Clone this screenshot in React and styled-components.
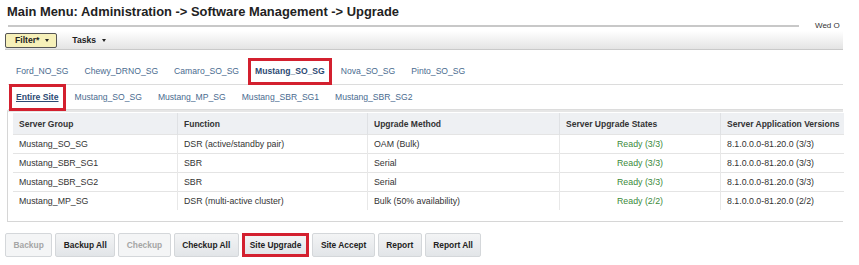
import React from "react";
import styled, { createGlobalStyle } from "styled-components";

const GlobalStyle = createGlobalStyle`
  body {
    margin: 0;
    background: #fff;
    font-family: "Liberation Sans", Arial, sans-serif;
    color: #333;
  }
`;

const Page = styled.div`
  width: 838px;
  padding: 4px 0 0 5px;
`;

const Header = styled.div`
  display: flex;
  align-items: flex-end;
`;

const TitleBlock = styled.div`
  width: 791px;
  margin-left: 3px;
  border-bottom: 2px solid #c8c8c8;
  padding-bottom: 5px;
`;

const Title = styled.h1`
  margin: 0 0 0 -1px;
  font-size: 12.9px;
  font-weight: bold;
  color: #222;
  line-height: 16px;
`;

const DateText = styled.div`
  margin-left: 16px;
  font-size: 8px;
  color: #333;
  line-height: 10px;
  position: relative;
  top: 4px;
`;

const Toolbar = styled.div`
  margin-top: 4px;
  height: 18px;
  display: flex;
  align-items: center;
  gap: 5px;
  background: linear-gradient(#ffffff, #e4e4e4);
  border-bottom: 1px solid #c9c9c9;
`;

const ToolButton = styled.div`
  display: flex;
  align-items: center;
  gap: 6px;
  height: 13px;
  padding: 0 7px 0 9px;
  font-size: 8.6px;
  font-weight: bold;
  color: #222;
  background: ${(p) => (p.$active ? "#f6f0b9" : "transparent")};
  border: 1px solid ${(p) => (p.$active ? "#555" : "transparent")};
  border-radius: 2px;
`;

const Caret = styled.span`
  width: 0;
  height: 0;
  border-left: 2.5px solid transparent;
  border-right: 2.5px solid transparent;
  border-top: 3px solid #222;
`;

const TabRow = styled.div`
  display: flex;
  align-items: center;
  height: ${(p) => p.$h}px;
  margin-left: 3px;
  margin-top: ${(p) => p.$mt || 0}px;
  border-bottom: 1px solid #dcdcdc;
`;

const Tab = styled.div`
  font-size: 8.6px;
  line-height: 11px;
  color: ${(p) => (p.$active ? "#2c4a73" : "#4a6b8f")};
  font-weight: ${(p) => (p.$active ? "bold" : "normal")};
  text-decoration: ${(p) => (p.$underline ? "underline" : "none")};
  padding: ${(p) => (p.$boxed ? "5px 4px" : "5px 8px")};
  margin: ${(p) => (p.$boxed ? "0 1px" : "0")};
  border: ${(p) => (p.$boxed ? "3px solid #d3202f" : "none")};
  white-space: nowrap;
`;

const TableFrame = styled.div`
  margin: 0 0 0 2px;
  height: 112px;
  padding: 1px 0 0 5px;
  border: 1px solid #d6d6d6;
  border-right: none;
  border-top: 2px solid #e6e6e6;
  box-sizing: border-box;
`;

const Table = styled.table`
  width: 831px;
  table-layout: fixed;
  border-collapse: collapse;
  font-size: 8.8px;
`;

const Th = styled.th`
  text-align: left;
  font-size: 8.5px;
  font-weight: bold;
  color: #333;
  background: #eef0f3;
  height: 21px;
  padding: 0 6px;
  border-right: 1px solid #dfe1e4;
  width: ${(p) => p.$w}px;
  white-space: nowrap;
  overflow: hidden;
  &:last-child {
    border-right: none;
  }
`;

const Td = styled.td`
  height: 18px;
  padding: 0 6px;
  color: ${(p) => (p.$ready ? "#3b8a3b" : "#333")};
  text-align: ${(p) => (p.$ready ? "center" : "left")};
  border-top: 1px solid #e4e4e4;
  border-right: 1px solid #e8e8e8;
  white-space: nowrap;
  &:last-child {
    border-right: none;
  }
`;

const ButtonBar = styled.div`
  display: flex;
  gap: 3px;
  margin-top: 11px;
`;

const Button = styled.div`
  height: 24px;
  display: flex;
  align-items: center;
  padding: 0 ${(p) => (p.$boxed ? 5 : 7.5)}px;
  font-size: 8.4px;
  font-weight: bold;
  color: ${(p) => (p.$disabled ? "#a5a5a5" : "#222")};
  background: ${(p) =>
    p.$disabled ? "#f4f5f6" : "linear-gradient(#f3f4f5, #e2e5e8)"};
  border: ${(p) => (p.$boxed ? "3px solid #d3202f" : "1px solid #d4d7da")};
  border-radius: ${(p) => (p.$boxed ? 0 : 2)}px;
  box-sizing: border-box;
`;

const tabs1 = ["Ford_NO_SG", "Chewy_DRNO_SG", "Camaro_SO_SG", "Mustang_SO_SG", "Nova_SO_SG", "Pinto_SO_SG"];
const tabs2 = ["Entire Site", "Mustang_SO_SG", "Mustang_MP_SG", "Mustang_SBR_SG1", "Mustang_SBR_SG2"];

const rows = [
  ["Mustang_SO_SG", "DSR (active/standby pair)", "OAM (Bulk)", "Ready (3/3)", "8.1.0.0.0-81.20.0 (3/3)"],
  ["Mustang_SBR_SG1", "SBR", "Serial", "Ready (3/3)", "8.1.0.0.0-81.20.0 (3/3)"],
  ["Mustang_SBR_SG2", "SBR", "Serial", "Ready (3/3)", "8.1.0.0.0-81.20.0 (3/3)"],
  ["Mustang_MP_SG", "DSR (multi-active cluster)", "Bulk (50% availability)", "Ready (2/2)", "8.1.0.0.0-81.20.0 (2/2)"],
];

const buttons = [
  { label: "Backup", disabled: true },
  { label: "Backup All" },
  { label: "Checkup", disabled: true },
  { label: "Checkup All" },
  { label: "Site Upgrade", boxed: true },
  { label: "Site Accept" },
  { label: "Report" },
  { label: "Report All" },
];

export default function App() {
  return (
    <Page>
      <GlobalStyle />
      <Header>
        <TitleBlock>
          <Title>Main Menu: Administration -&gt; Software Management -&gt; Upgrade</Title>
        </TitleBlock>
        <DateText>Wed O</DateText>
      </Header>
      <Toolbar>
        <ToolButton $active>
          Filter* <Caret />
        </ToolButton>
        <ToolButton>
          Tasks <Caret />
        </ToolButton>
      </Toolbar>
      <TabRow $h={25} $mt={9}>
        {tabs1.map((t, i) => (
          <Tab key={t} $boxed={i === 3} $active={i === 3}>
            {t}
          </Tab>
        ))}
      </TabRow>
      <TabRow $h={24}>
        {tabs2.map((t, i) => (
          <Tab key={t + i} $boxed={i === 0} $active={i === 0} $underline={i === 0}>
            {t}
          </Tab>
        ))}
      </TabRow>
      <TableFrame>
        <Table>
          <thead>
            <tr>
              <Th $w={152}>Server Group</Th>
              <Th $w={177}>Function</Th>
              <Th $w={179}>Upgrade Method</Th>
              <Th $w={148}>Server Upgrade States</Th>
              <Th>Server Application Versions</Th>
            </tr>
          </thead>
          <tbody>
            {rows.map((r) => (
              <tr key={r[0]}>
                {r.map((c, j) => (
                  <Td key={j} $ready={j === 3}>
                    {c}
                  </Td>
                ))}
              </tr>
            ))}
          </tbody>
        </Table>
      </TableFrame>
      <ButtonBar>
        {buttons.map((b) => (
          <Button key={b.label} $disabled={b.disabled} $boxed={b.boxed}>
            {b.label}
          </Button>
        ))}
      </ButtonBar>
    </Page>
  );
}
